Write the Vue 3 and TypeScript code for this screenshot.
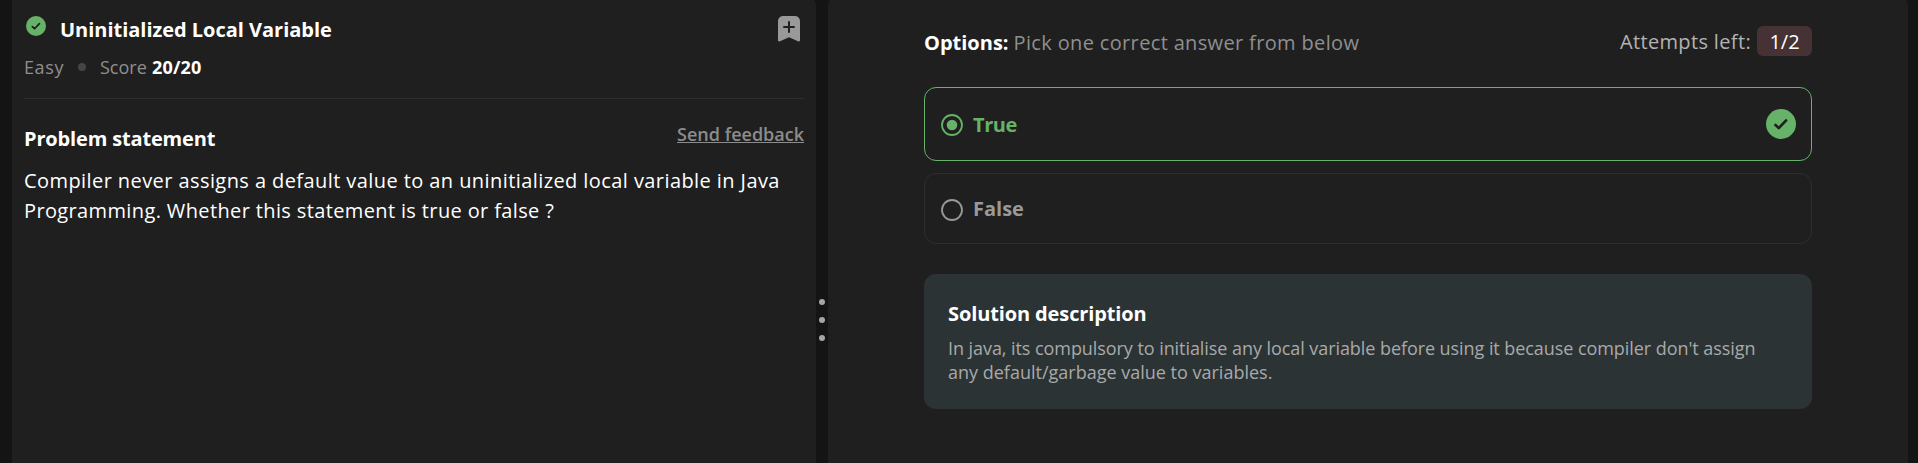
<script setup lang="ts">
import { ref } from 'vue'

interface Option {
  label: string
  correct: boolean
}

const options: Option[] = [
  { label: 'True', correct: true },
  { label: 'False', correct: false },
]
const selected = ref('True')
</script>

<template>
  <main class="page">
    <section class="panel problem">
      <header class="heading">
        <svg class="solved" viewBox="0 0 30 30">
          <circle cx="15" cy="15" r="15" fill="#66b268" />
          <path d="M9.5 16l3.3 3.1 7.3-7.7" fill="none" stroke="#1f1f1f" stroke-width="2.6" stroke-linecap="round" stroke-linejoin="round" />
        </svg>
        <h1 class="title">Uninitialized Local Variable</h1>
        <svg class="bookmark" viewBox="0 0 22 26">
          <path d="M5 0h12a5 5 0 0 1 5 5v19.2a1.3 1.3 0 0 1-2 1.1L11 21.2 2 25.3a1.3 1.3 0 0 1-2-1.1V5a5 5 0 0 1 5-5z" fill="#999" />
          <path d="M11 6v10M6 11h10" fill="none" stroke="#1f1f1f" stroke-width="2" stroke-linecap="round" />
        </svg>
      </header>
      <div class="meta">
        <span class="level">Easy</span>
        <i class="dot"></i>
        <span class="score">Score</span>
        <b class="points">20/20</b>
      </div>
      <div class="subhead">
        <h2 class="subtitle">Problem statement</h2>
        <a class="feedback">Send feedback</a>
      </div>
      <p class="statement">
        <span class="line first">Compiler never assigns a default value to an uninitialized local variable in Java</span>
        <span class="line second">Programming. Whether this statement is true or false ?</span>
      </p>
    </section>

    <div class="divider"><i></i><i></i><i></i></div>

    <section class="panel answer">
      <header class="bar">
        <p class="prompt"><b>Options:</b><span>Pick one correct answer from below</span></p>
        <p class="attempts"><span class="caption">Attempts left:</span><b class="badge">1/2</b></p>
      </header>
      <div
        v-for="option in options"
        :key="option.label"
        class="option"
        :class="{ selected: selected === option.label }"
        @click="selected = option.label"
      >
        <svg class="radio" viewBox="0 0 22 22">
          <circle cx="11" cy="11" r="10" fill="none" stroke="currentColor" stroke-width="1.8" />
          <circle v-if="selected === option.label" cx="11" cy="11" r="5.3" fill="currentColor" />
        </svg>
        <span class="label">{{ option.label }}</span>
        <svg v-if="option.correct && selected === option.label" class="tick" viewBox="0 0 30 30">
          <circle cx="15" cy="15" r="15" fill="#66b268" />
          <path d="M9.5 16l3.3 3.1 7.3-7.7" fill="none" stroke="#1f1f1f" stroke-width="2.6" stroke-linecap="round" stroke-linejoin="round" />
        </svg>
      </div>
      <article class="solution">
        <h2 class="solution-title">Solution description</h2>
        <p class="description">
          <span class="line first">In java, its compulsory to initialise any local variable before using it because compiler don't assign</span>
          <span class="line second">any default/garbage value to variables.</span>
        </p>
      </article>
    </section>
  </main>
</template>

<style>
body {
  margin: 0;
  background: #141414;
}
</style>

<style scoped>
* {
  box-sizing: border-box;
}
.page {
  display: flex;
  height: 463px;
  padding: 0 10px 0 12px;
  overflow: hidden;
  background: #141414;
  color: #fff;
  font: 400 20px/30px "Open Sans", "Noto Sans", sans-serif;
}
h1, h2, p {
  margin: 0;
  font-size: inherit;
  font-weight: 700;
}
p {
  font-weight: 400;
}
svg {
  display: block;
  flex: none;
}
.panel {
  height: 471px;
  margin-top: -4px;
  background: #1f1f1f;
}
.problem {
  width: 804px;
  padding: 18px 12px 0;
  border-radius: 0 10px 0 0;
}
.answer {
  width: 1080px;
  padding: 30px 96px 0;
  border-radius: 10px 10px 0 0;
}
.heading {
  display: flex;
  align-items: flex-start;
  height: 30px;
}
.solved {
  width: 20px;
  height: 20px;
  margin: 2px 14px 0 2px;
}
.title {
  padding-top: 1px;
  white-space: nowrap;
  letter-spacing: -0.02px;
}
.bookmark {
  width: 22px;
  height: 26px;
  margin: 2px 4px 0 auto;
}
.meta {
  display: flex;
  align-items: center;
  height: 55px;
  padding: 11px 0 19px;
  border-bottom: 1px solid #2e2e2e;
  color: #8f8f8f;
  font-size: 18px;
  line-height: 24px;
}
.level {
  width: 54px;
  letter-spacing: 0.6px;
}
.dot {
  width: 8px;
  height: 8px;
  margin-right: 14px;
  border-radius: 50%;
  background: #454545;
}
.score {
  width: 52px;
}
.points {
  color: #fff;
  letter-spacing: 0.15px;
}
.subhead {
  display: flex;
  justify-content: space-between;
  padding-top: 25px;
}
.subtitle {
  letter-spacing: -0.16px;
}
.feedback {
  margin-top: -2px;
  color: #8c8c8c;
  font-size: 18px;
  font-weight: 600;
  line-height: 24px;
  text-decoration: underline;
}
.statement {
  padding-top: 12px;
}
.line {
  display: block;
  white-space: nowrap;
}
.statement .first {
  letter-spacing: 0.42px;
}
.statement .second {
  letter-spacing: 0.37px;
}
.divider {
  display: flex;
  flex-direction: column;
  align-items: center;
  gap: 12px;
  width: 12px;
  padding-top: 299px;
}
.divider i {
  width: 6px;
  height: 6px;
  border-radius: 50%;
  background: #a6a6a6;
}
.bar {
  display: flex;
  justify-content: space-between;
  height: 61px;
}
.prompt {
  display: flex;
  gap: 5px;
  padding-top: 2px;
  color: #8f8f8f;
  letter-spacing: 0.35px;
}
.prompt b {
  color: #fff;
  letter-spacing: 0;
}
.attempts {
  display: flex;
  gap: 6px;
  color: #b3b3b3;
  letter-spacing: 0.35px;
}
.caption {
  padding-top: 1px;
}
.badge {
  width: 55px;
  height: 30px;
  border-radius: 6px;
  background: #463234;
  color: #fff;
  font-weight: 500;
  line-height: 31px;
  letter-spacing: 0;
  text-align: center;
}
.option {
  display: flex;
  align-items: center;
  height: 71px;
  padding: 0 15px 0 16px;
  border: 1px solid #2e2e2e;
  border-radius: 12px;
  color: #999;
  font-weight: 700;
}
.option.selected {
  height: 74px;
  margin-bottom: 12px;
  border-color: #66b268;
  color: #66b268;
  letter-spacing: -0.4px;
}
.radio {
  width: 22px;
  height: 22px;
  margin: 2px 10px 0 0;
}
.label {
  padding-top: 1px;
}
.selected .label {
  padding-top: 2px;
}
.tick {
  width: 30px;
  height: 30px;
  margin-left: auto;
}
.solution {
  height: 135px;
  margin-top: 30px;
  padding: 25px 24px 0;
  border-radius: 12px;
  background: #2c3335;
}
.solution-title {
  letter-spacing: -0.12px;
}
.description {
  padding-top: 7px;
  color: #a8a9a9;
  font-size: 18px;
  line-height: 24px;
}
.description .first {
  letter-spacing: -0.065px;
}
</style>
